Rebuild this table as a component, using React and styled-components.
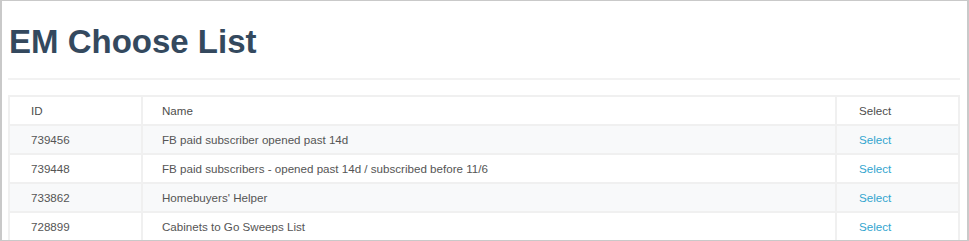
import styled, { createGlobalStyle } from "styled-components";

const GlobalStyle = createGlobalStyle`
  html, body {
    margin: 0;
    padding: 0;
    background: #ffffff;
  }
  body {
    font-family: "Liberation Sans", Arial, sans-serif;
  }
`;

const Frame = styled.div`
  width: 969px;
  height: 241px;
  box-sizing: border-box;
  border: 1px solid #c9c9c9;
  border-left-width: 2px;
  border-right-width: 2px;
  overflow: hidden;
  padding: 23px 7px 0 6px;
`;

const Title = styled.h1`
  margin: 0 0 0 1px;
  font-size: 33px;
  line-height: 36px;
  font-weight: 700;
  color: #34495e;
`;

const Rule = styled.hr`
  margin: 18px 0 15px;
  border: 0;
  border-top: 2px solid #f2f2f2;
`;

const Table = styled.table`
  width: 952px;
  border-collapse: collapse;
  border: 2px solid #f0f0f0;
  font-size: 11.6px;
  color: #555555;
`;

const Cell = styled.td`
  border: 2px solid #f0f0f0;
  height: 29px;
  padding: 0 0 0 ${(p) => p.$pad || 19}px;
  width: ${(p) => p.$w || "auto"};
  box-sizing: border-box;
  vertical-align: middle;
  font-weight: 400;
  text-align: left;
`;

const HeadCell = styled(Cell).attrs({ as: "th" })`
  color: #4d4d4d;
`;

const Row = styled.tr`
  background: ${(p) => (p.$striped ? "#f8f9fa" : "#ffffff")};
`;

const SelectLink = styled.a`
  color: #32a5cf;
  text-decoration: none;
  cursor: pointer;
`;

const lists = [
  { id: "739456", name: "FB paid subscriber opened past 14d" },
  { id: "739448", name: "FB paid subscribers - opened past 14d / subscribed before 11/6" },
  { id: "733862", name: "Homebuyers' Helper" },
  { id: "728899", name: "Cabinets to Go Sweeps List" },
];

export default function App() {
  return (
    <>
      <GlobalStyle />
      <Frame>
        <Title>EM Choose List</Title>
        <Rule />
        <Table>
          <thead>
            <Row>
              <HeadCell $w="133px" $pad={21}>ID</HeadCell>
              <HeadCell>Name</HeadCell>
              <HeadCell $w="123px" $pad={22}>Select</HeadCell>
            </Row>
          </thead>
          <tbody>
            {lists.map((list, index) => (
              <Row key={list.id} $striped={index % 2 === 0}>
                <Cell $pad={21}>{list.id}</Cell>
                <Cell>{list.name}</Cell>
                <Cell $pad={22}>
                  <SelectLink>Select</SelectLink>
                </Cell>
              </Row>
            ))}
          </tbody>
        </Table>
      </Frame>
    </>
  );
}
